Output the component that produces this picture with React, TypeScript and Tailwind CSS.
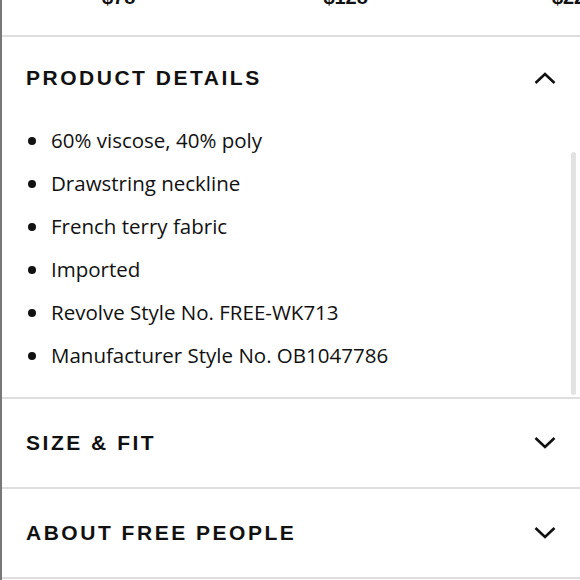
const details = [
  "60% viscose, 40% poly",
  "Drawstring neckline",
  "French terry fabric",
  "Imported",
  "Revolve Style No. FREE-WK713",
  "Manufacturer Style No. OB1047786",
];

const Chevron = ({ up }: { up?: boolean }) => (
  <svg width="22" height="14" viewBox="0 0 22 14" fill="none" className="text-[#111]">
    <polyline
      points={up ? "1.5,12 11,3 20.5,12" : "1.5,2 11,11 20.5,2"}
      stroke="currentColor"
      strokeWidth="2.6"
    />
  </svg>
);

const Section = ({ title }: { title: string }) => (
  <div className="flex h-[90px] items-center justify-between border-b-2 border-[#dedede] pl-[24px] pr-[24px]">
    <h2 className="text-[21px] font-bold tracking-[0.12em] text-[#111]">{title}</h2>
    <Chevron />
  </div>
);

export default function App() {
  return (
    <div
      className="relative h-[580px] w-[580px] overflow-hidden border-l-2 border-[#777] bg-white"
      style={{ fontFamily: '"Liberation Sans", Arial, sans-serif' }}
    >
      {/* prices row, scrolled mostly out of view */}
      <div className="flex h-[37px] flex-col overflow-hidden border-b-2 border-[#dedede]">
        <div className="-mt-[14px] flex text-[20px] font-bold leading-[23px] text-[#111]">
          <span className="ml-[100px]">$78</span>
          <span className="ml-[188px]">$128</span>
          <span className="ml-[184px]">$228</span>
        </div>
      </div>

      <div className="relative border-b-2 border-[#dedede]">
        <div className="flex h-[82px] items-center justify-between pl-[24px] pr-[24px]">
          <h2 className="text-[21px] font-bold tracking-[0.12em] text-[#111]">PRODUCT DETAILS</h2>
          <Chevron up />
        </div>
        <ul
          className="pb-[20px] pl-[26px] text-[20.5px] text-[#111]"
          style={{ fontFamily: '"Open Sans", sans-serif' }}
        >
          {details.map((item) => (
            <li key={item} className="flex h-[43px] items-center">
              <span className="mr-[15px] h-[8px] w-[8px] shrink-0 rounded-full bg-[#111]" />
              {item}
            </li>
          ))}
        </ul>
        <div className="absolute right-[4px] top-[115px] h-[243px] w-[5px] rounded-full bg-[#e2e2e2]" />
      </div>

      <Section title="SIZE & FIT" />
      <Section title="ABOUT FREE PEOPLE" />
    </div>
  );
}
